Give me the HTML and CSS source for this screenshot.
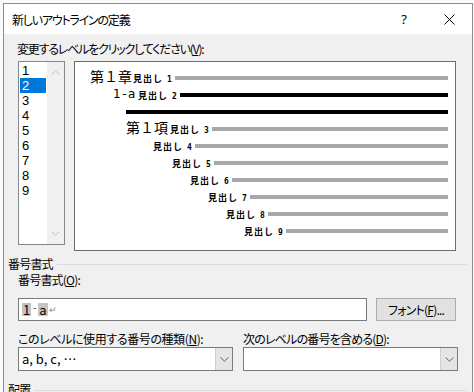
FILE: index.html
```html
<!DOCTYPE html>
<html lang="ja">
<head>
<meta charset="utf-8">
<link rel="stylesheet" href="styles.css">
</head>
<body>
<div class="dlg">
  <div class="titlebar">
    <span class="ttl">新しいアウトラインの定義</span>
    <span class="help">?</span>
    <span class="close"><svg width="11" height="11" viewBox="0 0 11 11"><path d="M0.5 0.5L10.5 10.5M10.5 0.5L0.5 10.5" stroke="#000" stroke-width="1" fill="none"/></svg></span>
  </div>
  <div class="body">
    <div class="lbl top">変更するレベルをクリックしてください(<u>V</u>):</div>
    <div class="levels">
      <div class="listbox">
        <ul class="items">
          <li>1</li><li class="sel">2</li><li>3</li><li>4</li><li>5</li><li>6</li><li>7</li><li>8</li><li>9</li>
        </ul>
        <div class="vscroll">
          <svg width="9" height="5" viewBox="0 0 9 5"><path d="M0.5 4.5L4.5 0.8L8.5 4.5" stroke="#c2c2c2" stroke-width="1" fill="none"/></svg>
          <svg width="9" height="5" viewBox="0 0 9 5"><path d="M0.5 0.5L4.5 4.2L8.5 0.5" stroke="#c2c2c2" stroke-width="1" fill="none"/></svg>
        </div>
      </div>
      <div class="preview">
        <div class="row p1"><span class="big b1">第１章</span><span class="cap">見出し<b>1</b></span><i class="ln"></i></div>
        <div class="row p2"><span class="big b2">1-a</span><span class="cap">見出し<b>2</b></span><i class="ln blk"></i></div>
        <div class="row p3"><i class="ln blk"></i></div>
        <div class="row p3"><span class="big b3">第１項</span><span class="cap">見出し<b>3</b></span><i class="ln"></i></div>
        <div class="row p4"><span class="cap">見出し<b>4</b></span><i class="ln"></i></div>
        <div class="row p5"><span class="cap">見出し<b>5</b></span><i class="ln"></i></div>
        <div class="row p6"><span class="cap">見出し<b>6</b></span><i class="ln"></i></div>
        <div class="row p7"><span class="cap">見出し<b>7</b></span><i class="ln"></i></div>
        <div class="row p8"><span class="cap">見出し<b>8</b></span><i class="ln"></i></div>
        <div class="row p9"><span class="cap">見出し<b>9</b></span><i class="ln"></i></div>
      </div>
    </div>
    <div class="group g1"><span class="gt">番号書式</span><i class="rule"></i></div>
    <div class="sect">
      <div class="lbl">番号書式(<u>O</u>):</div>
      <div class="inrow">
        <div class="input"><span class="fld">1</span><span class="sep">-</span><span class="fld">a</span><span class="ret">↵</span></div>
        <div class="btn">フォント(<u>F</u>)...</div>
      </div>
      <div class="cols">
        <div class="col">
          <div class="lbl ln-n">このレベルに使用する番号の種類(<u>N</u>):</div>
          <div class="combo"><span class="cv">a, b, c, …</span><span class="dd"><svg width="9" height="5" viewBox="0 0 9 5"><path d="M0.5 0.5L4.5 4.2L8.5 0.5" stroke="#606060" stroke-width="1" fill="none"/></svg></span></div>
        </div>
        <div class="col">
          <div class="lbl">次のレベルの番号を含める(<u>D</u>):</div>
          <div class="combo"><span class="cv"></span><span class="dd"><svg width="9" height="5" viewBox="0 0 9 5"><path d="M0.5 0.5L4.5 4.2L8.5 0.5" stroke="#606060" stroke-width="1" fill="none"/></svg></span></div>
        </div>
      </div>
    </div>
    <div class="group g2"><span class="gt">配置</span><i class="rule"></i></div>
  </div>
</div>
</body>
</html>
```
FILE: styles.css
```css
html, body {
  margin: 0;
  height: 100%;
  overflow: hidden;
  background: #fbfbfb;
}
body {
  font-family: "Noto Sans CJK JP", "Noto Sans", sans-serif;
  font-size: 12px;
  color: #000;
  font-feature-settings: "palt";
  letter-spacing: -0.8px;
}
.dlg {
  margin: 3px 0 0 3px;
  width: 468px;
  height: 400px;
  border: 1px solid #8c8c8c;
  background: #f0f0f0;
}
.titlebar {
  height: 30px;
  background: #fff;
  display: flex;
  align-items: center;
}
.ttl {
  flex: 1;
  padding-left: 8px;
  padding-top: 1px;
  line-height: 29px;
  letter-spacing: -1.2px;
}
.help {
  width: 30px;
  margin-right: 7px;
  text-align: center;
  font-family: "Noto Sans", sans-serif;
  font-size: 13px;
  line-height: 29px;
  letter-spacing: 0;
}
.close {
  width: 46px;
  display: flex;
  justify-content: center;
  padding-top: 1px;
}
.body {
  padding-top: 7px;
}
.lbl {
  line-height: 16px;
  height: 16px;
  white-space: nowrap;
}
.lbl.top {
  margin-left: 13px;
  letter-spacing: -1.2px;
}
.lbl.ln-n {
  letter-spacing: -0.4px;
}
.levels {
  display: flex;
  gap: 9px;
  margin: 4px 0 0 14px;
  align-items: flex-start;
}
.listbox {
  width: 45px;
  height: 182px;
  border: 1px solid #828790;
  background: #fff;
  display: flex;
}
.items {
  list-style: none;
  margin: 0;
  padding: 1px 1px 0 1px;
  width: 26px;
  font-family: "Liberation Sans", Arial, sans-serif;
  font-size: 13px;
  letter-spacing: 0;
}
.items li {
  height: 15px;
  line-height: 15px;
  padding-left: 2px;
}
.items li.sel {
  background: #0078d7;
  color: #fff;
}
.vscroll {
  width: 17px;
  background: #f0f0f0;
  display: flex;
  flex-direction: column;
  justify-content: space-between;
  align-items: center;
  padding: 8px 0 8px;
}
.preview {
  border: 1px solid #6e6e6e;
  background: #fff;
  padding-top: 7px;
  box-sizing: border-box;
  height: 190px;
  width: 382px;
  padding-right: 7px;
  letter-spacing: 0;
  font-feature-settings: normal;
}
.row {
  display: flex;
  align-items: flex-start;
  height: 17px;
  white-space: nowrap;
}
.p1 { padding-left: 15px; }
.p2 { padding-left: 38px; }
.p3 { padding-left: 51px; }
.p4 { padding-left: 78px; }
.p5 { padding-left: 97px; }
.p6 { padding-left: 115px; }
.p7 { padding-left: 133px; }
.p8 { padding-left: 151px; }
.p9 { padding-left: 169px; }
.big {
  font-size: 14px;
  line-height: 14px;
  flex: none;
}
.b1 { width: 43px; }
.b2 {
  width: 25px;
  font-family: "DejaVu Sans", sans-serif;
  font-size: 12px;
  line-height: 14px;
  margin-top: 1px;
  letter-spacing: 1.5px;
}
.b3 { width: 44px; }
.cap {
  width: 42px;
  flex: none;
  font-size: 9px;
  line-height: 9px;
  margin-top: 5px;
  letter-spacing: 1px;
  font-weight: 700;
}
.cap b {
  font-family: "DejaVu Sans Mono", monospace;
  font-size: 8px;
  margin-left: 4px;
}
.ln {
  flex: 1;
  height: 4px;
  margin-top: 7px;
  background: #a8a8a8;
}
.ln.blk {
  background: #000;
}
.group {
  display: flex;
  align-items: center;
  margin-left: 4px;
  margin-right: 5px;
  gap: 4px;
}
.g1 { margin-top: 5px; }
.gt {
  line-height: 16px;
}
.rule {
  flex: 1;
  height: 1px;
  background: #dcdcdc;
}
.sect {
  margin-left: 14px;
}
.inrow {
  display: flex;
  gap: 9px;
  margin-top: 10px;
  align-items: flex-start;
}
.input {
  width: 344px;
  height: 21px;
  border: 1px solid #7a7a7a;
  background: #fff;
  display: flex;
  align-items: center;
  padding-left: 3px;
  font-size: 13px;
  letter-spacing: 0;
}
.fld {
  background: #c4c4c4;
  line-height: 13px;
  padding: 0 1px;
}
.sep {
  font-size: 9px;
  line-height: 13px;
  padding: 0 2px;
  margin-top: -4px;
}
.ret {
  font-size: 9px;
  color: #8a8a8a;
  margin-left: 1px;
}
.btn {
  width: 78px;
  height: 21px;
  border: 1px solid #adadad;
  background: #e1e1e1;
  text-align: center;
  line-height: 21px;
}
.cols {
  display: flex;
  gap: 10px;
  margin-top: 10px;
}
.col {
  width: 215px;
}
.combo {
  height: 22px;
  border: 1px solid #7a7a7a;
  background: #fff;
  display: flex;
}
.cv {
  flex: 1;
  padding-left: 3px;
  line-height: 22px;
  font-size: 13px;
  letter-spacing: 0;
}
.dd {
  width: 16px;
  background: #e5e5e5;
  border-left: 1px solid #cfcfcf;
  display: flex;
  align-items: center;
  justify-content: center;
}
.g2 { margin-top: 11px; }
```
